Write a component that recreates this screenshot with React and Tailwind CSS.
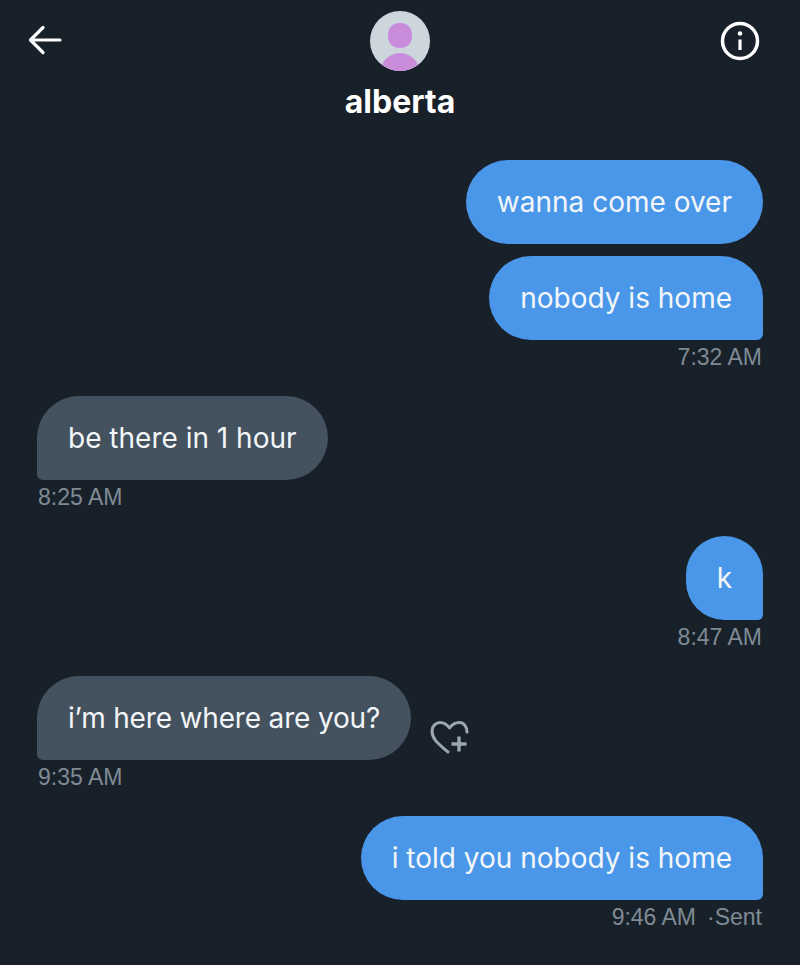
const BLUE = "bg-[#4a97e9] self-end";
const GREY = "bg-[#44515e] self-start";

function BackArrow() {
  return (
    <svg width="36" height="30" viewBox="0 0 36 30" fill="none" stroke="#fff" strokeWidth="3.2" strokeLinecap="round" strokeLinejoin="round">
      <path d="M32 15H3" />
      <path d="M15 2.500 2.500 15 15 27.500" />
    </svg>
  );
}

function InfoIcon() {
  return (
    <svg width="40" height="40" viewBox="0 0 40 40" fill="none" stroke="#fff">
      <circle cx="20" cy="20" r="17.500" strokeWidth="3.500" />
      <circle cx="20" cy="12.500" r="2.300" fill="#fff" stroke="none" />
      <path d="M20 18.500V29" strokeWidth="3.200" />
    </svg>
  );
}

function Avatar() {
  return (
    <svg width="60" height="60" viewBox="0 0 60 60">
      <circle cx="30" cy="30" r="30" fill="#ccd6dc" />
      <path d="M30 12c8 0 12 5 12 13 0 7-4 12-12 12s-12-5-12-12c0-8 4-13 12-13z" fill="#c98cdb" />
      <path d="M30 42c8 0 15 5 18 11.500C43 57.500 37 60 30 60s-13-2.500-18-6.500C15 47 22 42 30 42z" fill="#c98cdb" />
    </svg>
  );
}

function HeartPlus() {
  return (
    <svg width="40" height="38" viewBox="0 0 40 38" fill="none" stroke="#9ba6ae" strokeWidth="3" strokeLinecap="round" strokeLinejoin="round">
      <path d="M18 33C10 26 2 21 2 12 2 7 6 3.500 10 3.500 14 3.500 17 5.500 19.500 9 22 5.500 25.500 3.500 29.500 3.500 34 3.500 37 8 37 13" />
      <path d="M29 17.500v15M21.500 25h15" strokeWidth="3.400" strokeLinecap="butt" />
    </svg>
  );
}

function Bubble({ text, mine, round, className = "" }) {
  return (
    <div
      className={`h-[84px] flex items-center justify-center px-[31px] text-[28px] text-[#f3f6f8] rounded-[42px] font-['Inter',sans-serif] ${mine ? BLUE : GREY} ${
        round ? "" : mine ? "rounded-br-[6px]" : "rounded-bl-[6px]"
      } ${className}`}
    >
      {text}
    </div>
  );
}

function Time({ children, mine }) {
  return (
    <div className={`h-8 mb-6 pt-[2px] flex items-center text-[23px] text-[#7f8a93] ${mine ? "self-end mr-px" : "self-start ml-px"}`}>
      {children}
    </div>
  );
}

export default function App() {
  return (
    <div className="w-[800px] h-[965px] overflow-hidden bg-[#18212a] font-['Liberation_Sans',Arial,sans-serif]">
      {/* Header */}
      <div className="relative flex flex-col items-center pt-[11px] pb-10">
        <div className="absolute left-[28px] top-[25px]">
          <BackArrow />
        </div>
        <Avatar />
        <div className="absolute left-[720px] top-[21px]">
          <InfoIcon />
        </div>
        <div className="mt-[13px] h-9 leading-9 text-[32px] font-bold text-white font-['Inter',sans-serif]">
          alberta
        </div>
      </div>

      {/* Messages */}
      <div className="flex flex-col px-[37px]">
        <Bubble mine round text="wanna come over" />
        <div className="h-3" />
        <Bubble mine text="nobody is home" />
        <Time mine>7:32 AM</Time>

        <Bubble text="be there in 1 hour" />
        <Time>8:25 AM</Time>

        <Bubble mine text="k" />
        <Time mine>8:47 AM</Time>

        <div className="flex gap-[19px] self-start">
          <Bubble text="i’m here where are you?" className="tracking-[-0.17px]" />
          <div className="self-end mb-[3px]">
            <HeartPlus />
          </div>
        </div>
        <Time>9:35 AM</Time>

        <Bubble mine text="i told you nobody is home" />
        <Time mine>
          9:46 AM<span className="ml-[11px]">·Sent</span>
        </Time>
      </div>
    </div>
  );
}
